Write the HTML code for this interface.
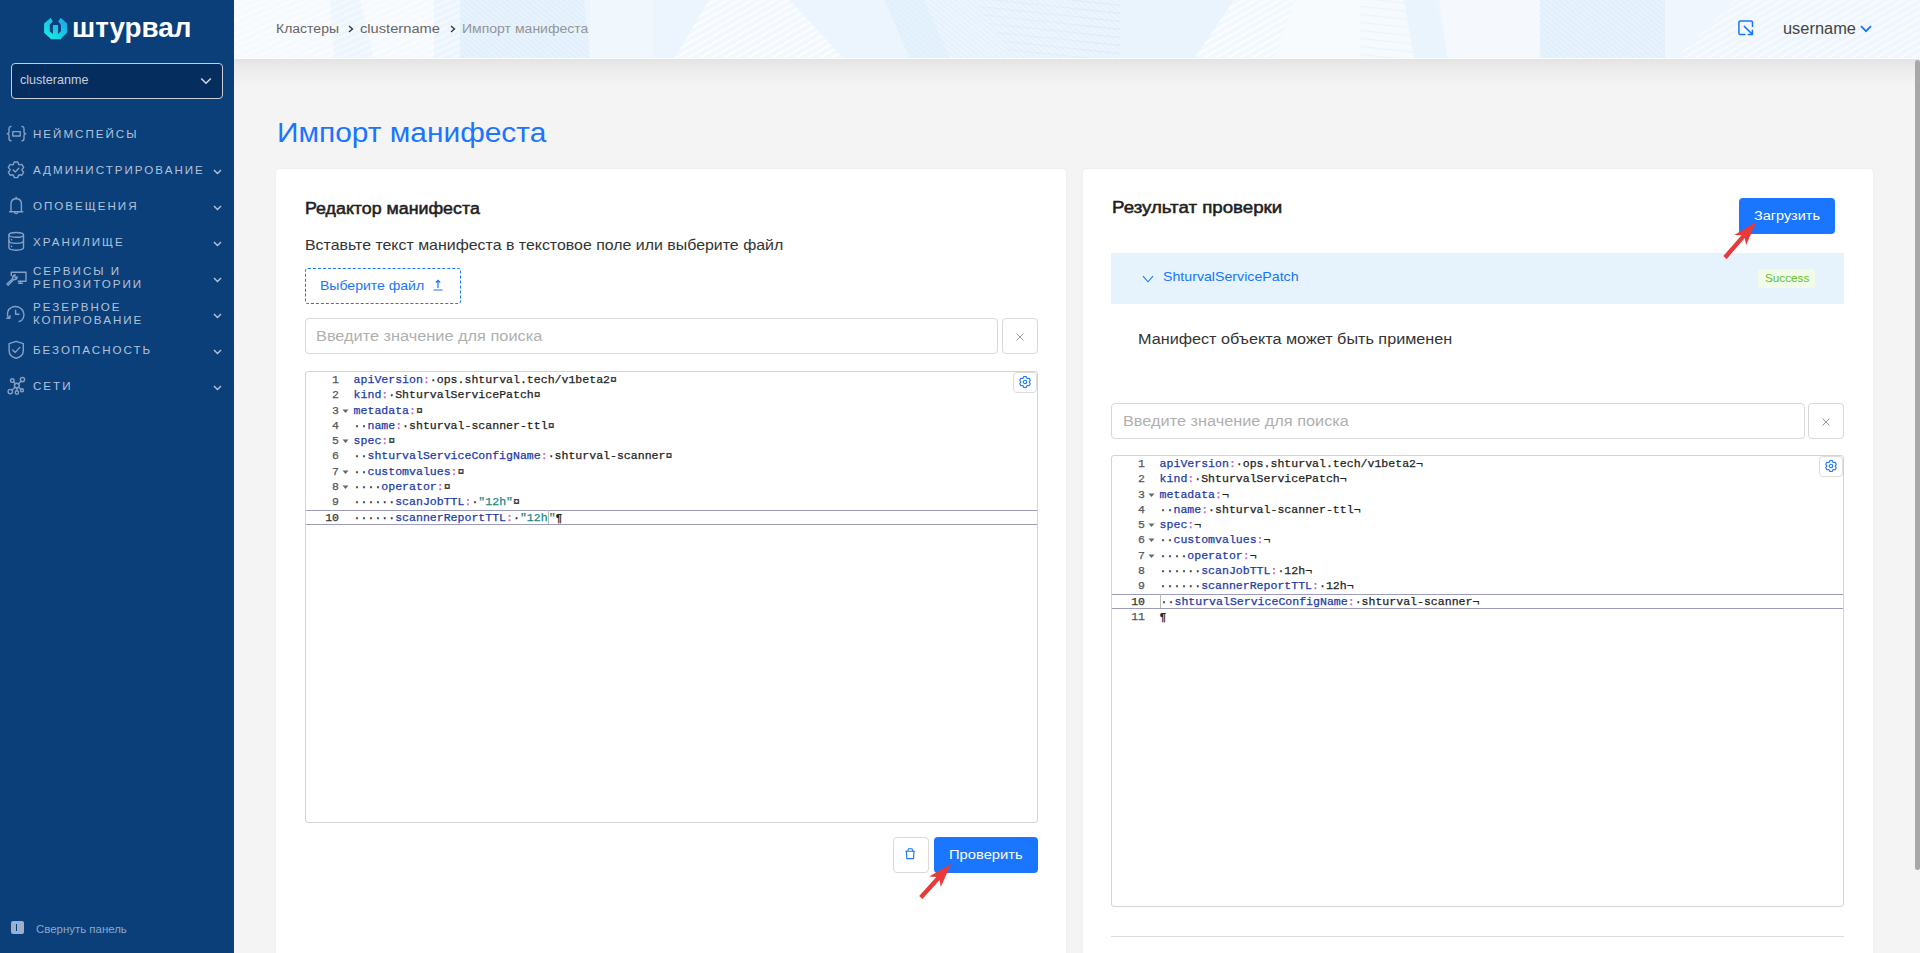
<!DOCTYPE html>
<html><head><meta charset="utf-8"><style>
*{box-sizing:border-box;margin:0;padding:0}
html,body{width:1920px;height:953px;overflow:hidden;background:#f4f4f4;font-family:"Liberation Sans",sans-serif;color:#1f1f1f}
.abs{position:absolute}
#sb{position:absolute;left:0;top:0;width:234px;height:953px;background:#0a3f7a}
#hdr{position:absolute;left:234px;top:0;width:1686px;height:59px;background:#f1f7fd;overflow:hidden}
#shadow{position:absolute;left:234px;top:59px;width:1686px;height:28px;background:linear-gradient(#e3e3e3,#ebebeb 30%,#f4f4f4)}
.card{position:absolute;top:169px;height:800px;background:#fff;border-radius:4px;box-shadow:0 0 3px rgba(0,0,0,.05)}
.txt{position:absolute;white-space:nowrap;line-height:1}
.nav{position:absolute;left:33px;color:#b3c3d9;font-size:11.6px;letter-spacing:2.0px;white-space:nowrap;line-height:13px}
.btn{position:absolute;background:#1a75ff;border-radius:4px}
.input{position:absolute;border:1px solid #d9d9d9;border-radius:4px;background:#fff}
.editor{position:absolute;border:1px solid #d4d4d4;border-radius:3px;background:#fff}
.code{position:absolute;font-family:"Liberation Mono",monospace;font-size:11.55px;line-height:15.3px;white-space:pre;color:#333}
.code{-webkit-text-stroke:0.25px currentColor}.code .k{color:#1d3aa8}.code .p{color:#c85ac8}.code .v{color:#222}.code .s{color:#178883}.code .i{color:#222}
.code .cur{display:inline-block;width:0;height:14px;border-left:1px solid #bbb;vertical-align:top;margin-top:0px}
.gut{text-align:right}
</style></head><body>

<div id="sb">
<svg class="abs" style="left:40px;top:14px" width="32" height="30" viewBox="0 0 32 30">
<defs><linearGradient id="lg" x1="0" y1="1" x2="1" y2="0"><stop offset="0" stop-color="#1ef2df"/><stop offset="1" stop-color="#1a9fe9"/></linearGradient></defs>
<path fill="url(#lg)" d="M10.7,3.8 L12.8,7.6 L9.8,10.8 L9.8,17.2 L12.9,19.9 L12.9,11 L18.1,11 L18.1,19.9 L20.9,17.2 L20.9,10.8 L18.2,7.6 L20.6,3.8 L27.1,9.6 L27.1,18.8 L20.5,25.2 L11.2,25.2 L4.1,18.8 L4.1,9.6 Z"/>
</svg>
<div class="txt" style="left:71.97px;top:14.0px;font-size:27.45px;font-weight:700;color:#fff;transform:scaleX(1.0132);transform-origin:0 0;">штурвал</div>
<div class="abs" style="left:11px;top:63px;width:212px;height:36px;border:1.3px solid #c9cdd6;border-radius:4px;background:#052e5f"></div>
<div class="txt" style="left:19.82px;top:74.0px;font-size:12.87px;font-weight:400;color:#c6cedb;transform:scaleX(0.9768);transform-origin:0 0;">clusteranme</div>
<svg class="abs" style="left:200px;top:77px" width="12" height="8" viewBox="0 0 12 8"><path d="M1.2 1.5 L6 6.2 L10.8 1.5" fill="none" stroke="#d0d5de" stroke-width="1.6"/></svg>
<div class="nav" style="top:126.7px">НЕЙМСПЕЙСЫ</div>
<div class="nav" style="top:162.7px">АДМИНИСТРИРОВАНИЕ</div>
<svg class="abs" style="left:213px;top:169.1px" width="9" height="6" viewBox="0 0 9 6"><path d="M1 1 L4.5 4.5 L8 1" fill="none" stroke="#b6c4d8" stroke-width="1.4"/></svg>
<div class="nav" style="top:198.7px">ОПОВЕЩЕНИЯ</div>
<svg class="abs" style="left:213px;top:205.1px" width="9" height="6" viewBox="0 0 9 6"><path d="M1 1 L4.5 4.5 L8 1" fill="none" stroke="#b6c4d8" stroke-width="1.4"/></svg>
<div class="nav" style="top:234.7px">ХРАНИЛИЩЕ</div>
<svg class="abs" style="left:213px;top:241.1px" width="9" height="6" viewBox="0 0 9 6"><path d="M1 1 L4.5 4.5 L8 1" fill="none" stroke="#b6c4d8" stroke-width="1.4"/></svg>
<div class="nav" style="top:264.0px">СЕРВИСЫ И</div>
<div class="nav" style="top:277.0px">РЕПОЗИТОРИИ</div>
<svg class="abs" style="left:213px;top:277.1px" width="9" height="6" viewBox="0 0 9 6"><path d="M1 1 L4.5 4.5 L8 1" fill="none" stroke="#b6c4d8" stroke-width="1.4"/></svg>
<div class="nav" style="top:300.0px">РЕЗЕРВНОЕ</div>
<div class="nav" style="top:313.0px">КОПИРОВАНИЕ</div>
<svg class="abs" style="left:213px;top:313.1px" width="9" height="6" viewBox="0 0 9 6"><path d="M1 1 L4.5 4.5 L8 1" fill="none" stroke="#b6c4d8" stroke-width="1.4"/></svg>
<div class="nav" style="top:342.7px">БЕЗОПАСНОСТЬ</div>
<svg class="abs" style="left:213px;top:349.1px" width="9" height="6" viewBox="0 0 9 6"><path d="M1 1 L4.5 4.5 L8 1" fill="none" stroke="#b6c4d8" stroke-width="1.4"/></svg>
<div class="nav" style="top:378.7px">СЕТИ</div>
<svg class="abs" style="left:213px;top:385.1px" width="9" height="6" viewBox="0 0 9 6"><path d="M1 1 L4.5 4.5 L8 1" fill="none" stroke="#b6c4d8" stroke-width="1.4"/></svg>

<svg class="abs" style="left:0;top:110px" width="34" height="300" viewBox="0 110 34 300" fill="none" stroke="#86a0c4" stroke-width="1.4" stroke-linecap="round" stroke-linejoin="round">
 <!-- braces -->
 <path d="M11 126.5 C9 126.5 9 127.5 9 129.5 L9 132 C9 133.2 8 133.8 7.3 133.8 C8 133.8 9 134.4 9 135.6 L9 138.5 C9 140.3 9.5 140.8 11 140.8"/>
 <path d="M22 126.5 C24 126.5 24 127.5 24 129.5 L24 132 C24 133.2 25 133.8 25.7 133.8 C25 133.8 24 134.4 24 135.6 L24 138.5 C24 140.3 23.5 140.8 22 140.8"/>
 <rect x="12.8" y="131.6" width="7.4" height="4.4"/>
 <!-- gear check -->
 <path d="M13.37 164.41 L14.20 162.01 L17.80 162.01 L18.63 164.41 L19.36 164.83 L21.85 164.34 L23.65 167.46 L21.99 169.38 L21.99 170.22 L23.65 172.14 L21.85 175.26 L19.36 174.77 L18.63 175.19 L17.80 177.59 L14.20 177.59 L13.37 175.19 L12.64 174.77 L10.15 175.26 L8.35 172.14 L10.01 170.22 L10.01 169.38 L8.35 167.46 L10.15 164.34 L12.64 164.83 Z"/>
 <path d="M13.2 170 L15.2 172 L18.8 168.3"/>
 <!-- bell -->
 <path d="M11 211.5 L11 204 C11 200.5 13.3 198.8 16.2 198.8 C19.1 198.8 21.4 200.5 21.4 204 L21.4 211.5"/>
 <path d="M9.6 211.8 L22.8 211.8"/><path d="M16.2 197.3 L16.2 198.6"/><path d="M14.6 212.5 C14.8 214 17.6 214 17.8 212.5"/>
 <!-- database -->
 <ellipse cx="16.2" cy="234.9" rx="7.3" ry="2.4"/>
 <path d="M8.9 234.9 L8.9 247.6 C8.9 249 12 250.2 16.2 250.2 C20.4 250.2 23.5 249 23.5 247.6 L23.5 234.9"/>
 <path d="M8.9 240.8 C8.9 242.2 12 243.4 16.2 243.4 C20.4 243.4 23.5 242.2 23.5 240.8"/>
 <path d="M11.5 239.8 L11.6 239.8 M11.5 246.4 L11.6 246.4" stroke-width="1.6"/>
 <!-- monitor wrench -->
 <path d="M11.3 275.5 L11.3 272.2 L26 272.2 L26 281.2 L18.2 281.2"/>
 <path d="M18.6 283.2 L22.3 283.2 M20.4 281.4 L20.4 283"/>
 <path d="M7 284 L12.8 278.4 C12.1 276.6 13.4 274.8 15.3 275 L14.3 276.6 L15.6 277.9 L17.2 276.9 C17.3 278.9 15.5 280.1 13.8 279.5 L8.1 285.2 Z"/>
 <!-- clock -->
 <path d="M8.5 318.2 C6.3 314.2 7.6 309 12 307.2 C16.5 305.3 21.6 307.5 23.4 312 C25 316.2 23 320.6 19.2 321.5"/>
 <path d="M6.8 318.2 L9.8 318.2 L10 315.8"/>
 <path d="M15.6 310.2 L15.6 314.2 L19 314.2"/>
 <!-- shield -->
 <path d="M16.2 341.3 L23.3 343.6 L23.3 350.5 C23.3 354.8 20 357.4 16.2 358.3 C12.4 357.4 9.1 354.8 9.1 350.5 L9.1 343.6 Z"/>
 <path d="M12.7 350 L15.3 352.4 L19.8 347.4"/>
 <!-- network -->
 <circle cx="16.8" cy="385.6" r="2.4"/>
 <circle cx="12.3" cy="380.6" r="1.8"/><circle cx="22.5" cy="379.6" r="2.1"/>
 <circle cx="10.3" cy="391.6" r="2.2"/><circle cx="16.9" cy="392.5" r="1.7"/><circle cx="22" cy="390.3" r="1.5"/>
 <path d="M13.4 381.8 L15.3 383.8 M18.4 384 L21 381.2 M15 387.3 L12 390.2 M16.9 388 L16.9 390.8 M18.6 387.2 L20.8 389.3"/>
</svg>

<div class="abs" style="left:11px;top:921px;width:13px;height:13px;border-radius:2px;background:#9eb0c9"></div>
<div class="abs" style="left:15.5px;top:924px;width:1.4px;height:7px;background:#0a3f7a"></div>
<div class="txt" style="left:36.39px;top:924.8px;font-size:10.32px;font-weight:400;color:#8ea8c9;transform:scaleX(1.1088);transform-origin:0 0;">Свернуть панель</div>
</div>


<div id="hdr">
<svg class="abs" style="left:0;top:0" width="1686" height="59">
 <defs>
  <pattern id="pw" width="6" height="6" patternUnits="userSpaceOnUse" patternTransform="rotate(-30)"><rect width="6" height="2" fill="#ffffff" opacity=".75"/></pattern>
  <pattern id="pb" width="4" height="4" patternUnits="userSpaceOnUse" patternTransform="rotate(40)"><rect width="4" height="1" fill="#d6e9fb" opacity=".6"/></pattern>
  <pattern id="pw2" width="6" height="6" patternUnits="userSpaceOnUse" patternTransform="rotate(-25)"><rect width="6" height="1.8" fill="#ffffff" opacity=".8"/></pattern>
  <pattern id="ph" width="8" height="8" patternUnits="userSpaceOnUse" patternTransform="rotate(6)"><rect width="8" height="1.2" fill="#dcecfa" opacity=".8"/></pattern>
 </defs>
 <rect width="1686" height="59" fill="#ecf5fd"/>
 <rect x="0" width="200" height="59" fill="#f6fafe"/>
 <polygon points="96,0 126,0 140,59 100,59" fill="#edf5fd"/>
 <rect x="0" width="240" height="59" fill="url(#pw2)" opacity=".6"/>
 <polygon points="226,0 350,0 356,59 226,59" fill="#e7f2fd"/>
 <polygon points="226,0 350,0 356,59 226,59" fill="url(#pb)"/>
 <polygon points="356,0 420,0 420,59 356,59" fill="#f0f7fd"/>
 <polygon points="475,0 556,0 610,59 440,59" fill="#f2f8fe"/>
 <polygon points="475,0 556,0 610,59 440,59" fill="url(#pw)"/>
 <polygon points="650,0 690,0 716,59 676,59" fill="#e5f2fc"/>
 <polygon points="650,0 900,0 900,59 676,59" fill="url(#pb)" opacity=".8"/>
 <polygon points="740,0 900,0 900,59 780,59" fill="url(#ph)"/>
 <polygon points="846,0 900,0 886,59 846,59" fill="url(#ph)"/>
 <polygon points="886,0 1000,0 980,59 886,59" fill="#e9f4fd"/>
 <polygon points="1000,0 1060,0 1040,59 960,59" fill="#f1f8fe"/>
 <polygon points="1000,0 1060,0 1040,59 960,59" fill="url(#pw)"/>
 <polygon points="1060,0 1130,0 1126,59 1040,59" fill="#f8fbfe"/>
 <polygon points="1126,0 1180,0 1180,59 1126,59" fill="#f6fafe"/>
 <polygon points="1126,0 1180,0 1180,59 1126,59" fill="url(#ph)" opacity=".6"/>
 <polygon points="1170,0 1200,0 1214,59 1180,59" fill="#eaf4fd"/>
 <polygon points="1205,0 1306,0 1306,59 1214,59" fill="#f5f9fe"/>
 <polygon points="1306,0 1431,0 1431,59 1306,59" fill="#e7f2fd"/>
 <polygon points="1306,0 1431,0 1431,59 1306,59" fill="url(#pb)"/>
 <polygon points="1431,0 1686,0 1686,59 1431,59" fill="#eff6fd"/>
 <polygon points="1500,0 1686,0 1686,59 1440,59" fill="url(#pw)" opacity=".7"/>
 <rect y="58" width="1686" height="1" fill="#fafcfe"/>
</svg>
<div class="txt" style="left:276.23px;top:21.8px;font-size:13.08px;font-weight:400;color:#666;transform:scaleX(1.0702);transform-origin:0 0;margin-left:-234px">Кластеры</div>
<svg class="abs" style="left:114px;top:25px" width="6" height="8" viewBox="0 0 6 8"><path d="M1 1 L4.5 4 L1 7" fill="none" stroke="#333" stroke-width="1.3"/></svg>
<div class="txt" style="left:359.79px;top:22.0px;font-size:13.25px;font-weight:400;color:#666;transform:scaleX(1.1085);transform-origin:0 0;margin-left:-234px">clustername</div>
<svg class="abs" style="left:215.5px;top:25px" width="6" height="8" viewBox="0 0 6 8"><path d="M1 1 L4.5 4 L1 7" fill="none" stroke="#333" stroke-width="1.3"/></svg>
<div class="txt" style="left:461.8px;top:23.0px;font-size:12.79px;font-weight:400;color:#959595;transform:scaleX(1.0974);transform-origin:0 0;margin-left:-234px">Импорт манифеста</div>
<svg class="abs" style="left:1503.5px;top:20px" width="16" height="16" viewBox="0 0 16 16" fill="none" stroke="#1a75ff" stroke-width="1.5" stroke-linecap="round" stroke-linejoin="round"><path d="M6.9 14.5 L2.2 14.5 Q0.9 14.5 0.9 13.2 L0.9 2.2 Q0.9 0.9 2.2 0.9 L13.2 0.9 Q14.5 0.9 14.5 2.2 L14.5 6.6"/><path d="M6.3 6.4 L14.3 14.2 M14.4 10.2 L14.4 14.4 L10.2 14.4"/></svg>
<div class="txt" style="left:1782.71px;top:21.4px;font-size:15.8px;font-weight:400;color:#444;transform:scaleX(1.0384);transform-origin:0 0;margin-left:-234px">username</div>
<svg class="abs" style="left:1626px;top:25px" width="12" height="8" viewBox="0 0 12 8"><path d="M1 1.2 L6 6.2 L11 1.2" fill="none" stroke="#1a75ff" stroke-width="1.8"/></svg>
</div>

<div id="shadow"></div>
<div class="txt" style="left:276.85px;top:118.9px;font-size:27.76px;font-weight:400;color:#1a75ff;transform:scaleX(1.077);transform-origin:0 0;">Импорт манифеста</div>

<div class="card" style="left:276px;width:790px"></div>
<div class="txt" style="left:304.94px;top:200.6px;font-size:16.86px;font-weight:400;color:#1f1f1f;transform:scaleX(1.0558);transform-origin:0 0;-webkit-text-stroke:0.55px #1f1f1f">Редактор манифеста</div>
<div class="txt" style="left:304.9px;top:237.9px;font-size:14.54px;font-weight:400;color:#333;transform:scaleX(1.095);transform-origin:0 0;">Вставьте текст манифеста в текстовое поле или выберите файл</div>
<div class="abs" style="left:305px;top:268px;width:156px;height:36px;border:1px dashed #1a75ff;border-radius:3px"></div>
<div class="txt" style="left:320.25px;top:279.0px;font-size:13.37px;font-weight:400;color:#1a75ff;transform:scaleX(1.0505);transform-origin:0 0;">Выберите файл</div>
<svg class="abs" style="left:432px;top:279px" width="12" height="12" viewBox="0 0 12 12" fill="none" stroke="#1a75ff" stroke-width="1.2"><path d="M1.5 11 L10.5 11 M6 9 L6 1.5 M3.8 3.5 L6 1.3 L8.2 3.5"/></svg>
<div class="input" style="left:305px;top:318px;width:693px;height:36px"></div>
<div class="txt" style="left:316.35px;top:329.4px;font-size:14.24px;font-weight:400;color:#b0b0b0;transform:scaleX(1.1459);transform-origin:0 0;">Введите значение для поиска</div>
<div class="input" style="left:1002px;top:318px;width:36px;height:36px"></div>
<svg class="abs" style="left:1015px;top:332px" width="10" height="10" viewBox="0 0 10 10" stroke="#9a9a9a" stroke-width="1"><path d="M1.5 1.5 L8.5 8.5 M8.5 1.5 L1.5 8.5"/></svg>

<div class="editor" style="left:305px;top:371px;width:733px;height:452px"></div>
<div class="abs" style="left:306px;top:510.10px;width:731px;height:15.3px;border-top:1px solid #9c9cbd;border-bottom:1px solid #9c9cbd"></div>
<div class="code gut" style="right:1581px;top:371.90px;color:#555">1</div>
<div class="code" style="left:353.6px;top:371.90px"><span class="k">apiVersion</span><span class="p">:</span><span class="i">·</span><span class="v">ops.shturval.tech/v1beta2</span><span class="i">¤</span></div>
<div class="code gut" style="right:1581px;top:387.20px;color:#555">2</div>
<div class="code" style="left:353.6px;top:387.20px"><span class="k">kind</span><span class="p">:</span><span class="i">·</span><span class="v">ShturvalServicePatch</span><span class="i">¤</span></div>
<div class="code gut" style="right:1581px;top:402.50px;color:#555">3</div>
<svg class="abs" style="left:342px;top:408.50px" width="7" height="5" viewBox="0 0 7 5"><path d="M0.5 0.5 L6.5 0.5 L3.5 4 Z" fill="#666"/></svg>
<div class="code" style="left:353.6px;top:402.50px"><span class="k">metadata</span><span class="p">:</span><span class="i">¤</span></div>
<div class="code gut" style="right:1581px;top:417.80px;color:#555">4</div>
<div class="code" style="left:353.6px;top:417.80px"><span class="i">··</span><span class="k">name</span><span class="p">:</span><span class="i">·</span><span class="v">shturval-scanner-ttl</span><span class="i">¤</span></div>
<div class="code gut" style="right:1581px;top:433.10px;color:#555">5</div>
<svg class="abs" style="left:342px;top:439.10px" width="7" height="5" viewBox="0 0 7 5"><path d="M0.5 0.5 L6.5 0.5 L3.5 4 Z" fill="#666"/></svg>
<div class="code" style="left:353.6px;top:433.10px"><span class="k">spec</span><span class="p">:</span><span class="i">¤</span></div>
<div class="code gut" style="right:1581px;top:448.40px;color:#555">6</div>
<div class="code" style="left:353.6px;top:448.40px"><span class="i">··</span><span class="k">shturvalServiceConfigName</span><span class="p">:</span><span class="i">·</span><span class="v">shturval-scanner</span><span class="i">¤</span></div>
<div class="code gut" style="right:1581px;top:463.70px;color:#555">7</div>
<svg class="abs" style="left:342px;top:469.70px" width="7" height="5" viewBox="0 0 7 5"><path d="M0.5 0.5 L6.5 0.5 L3.5 4 Z" fill="#666"/></svg>
<div class="code" style="left:353.6px;top:463.70px"><span class="i">··</span><span class="k">customvalues</span><span class="p">:</span><span class="i">¤</span></div>
<div class="code gut" style="right:1581px;top:479.00px;color:#555">8</div>
<svg class="abs" style="left:342px;top:485.00px" width="7" height="5" viewBox="0 0 7 5"><path d="M0.5 0.5 L6.5 0.5 L3.5 4 Z" fill="#666"/></svg>
<div class="code" style="left:353.6px;top:479.00px"><span class="i">····</span><span class="k">operator</span><span class="p">:</span><span class="i">¤</span></div>
<div class="code gut" style="right:1581px;top:494.30px;color:#555">9</div>
<div class="code" style="left:353.6px;top:494.30px"><span class="i">······</span><span class="k">scanJobTTL</span><span class="p">:</span><span class="i">·</span><span class="s">&quot;12h&quot;</span><span class="i">¤</span></div>
<div class="code gut" style="right:1581px;top:509.60px;color:#333">10</div>
<div class="code" style="left:353.6px;top:509.60px"><span class="i">······</span><span class="k">scannerReportTTL</span><span class="p">:</span><span class="i">·</span><span class="s">&quot;12h</span><span class="cur"></span><span class="s">&quot;</span><span class="i">¶</span></div>
<div class="abs" style="left:1013px;top:372px;width:24px;height:21px;border:1px solid #ddd;border-radius:4px;background:#fff"></div>
<svg class="abs" style="left:1019px;top:376px" width="12" height="12" viewBox="0 0 12 12"><path d="M4.25 2.07 L4.84 0.52 L7.16 0.52 L7.75 2.07 L8.53 2.52 L10.16 2.25 L11.33 4.27 L10.28 5.55 L10.28 6.45 L11.33 7.73 L10.16 9.75 L8.53 9.48 L7.75 9.93 L7.16 11.48 L4.84 11.48 L4.25 9.93 L3.47 9.48 L1.84 9.75 L0.67 7.73 L1.72 6.45 L1.72 5.55 L0.67 4.27 L1.84 2.25 L3.47 2.52 Z" fill="none" stroke="#1a75ff" stroke-width="1.1" stroke-linejoin="round"/><circle cx="6" cy="6" r="1.7" fill="none" stroke="#1a75ff" stroke-width="1.1"/></svg>

<div class="input" style="left:893px;top:837px;width:36px;height:36px"></div>
<svg class="abs" style="left:898px;top:842px" width="24" height="24" viewBox="0 0 24 24" fill="none" stroke="#1a75ff" stroke-width="1.1" stroke-linejoin="round"><path d="M7.3 9.2 L16.9 9.2 M9.6 9.2 L10.4 6.8 L14.1 6.8 L14.8 9.2 M8.4 9.2 L8.8 16.6 L15.5 16.6 L16 9.2"/></svg>
<div class="btn" style="left:934px;top:837px;width:104px;height:36px"></div>
<div class="txt" style="left:948.87px;top:848.1px;font-size:13.08px;font-weight:400;color:#fff;transform:scaleX(1.1266);transform-origin:0 0;">Проверить</div>


<div class="card" style="left:1083px;width:790px"></div>
<div class="txt" style="left:1111.81px;top:199.1px;font-size:17.15px;font-weight:400;color:#1f1f1f;transform:scaleX(1.0903);transform-origin:0 0;-webkit-text-stroke:0.55px #1f1f1f">Результат проверки</div>
<div class="btn" style="left:1739px;top:198px;width:96px;height:36px"></div>
<div class="txt" style="left:1754.14px;top:210.2px;font-size:12.5px;font-weight:400;color:#fff;transform:scaleX(1.1554);transform-origin:0 0;">Загрузить</div>
<div class="abs" style="left:1111px;top:253px;width:733px;height:51px;background:#e6f3fd"></div>
<svg class="abs" style="left:1141.5px;top:275px" width="12" height="9" viewBox="0 0 12 9"><path d="M1 1.2 L6 6.8 L11 1.2" fill="none" stroke="#1a75ff" stroke-width="1.05"/></svg>
<div class="txt" style="left:1162.9px;top:270.9px;font-size:12.94px;font-weight:400;color:#1a75ff;transform:scaleX(1.0959);transform-origin:0 0;">ShturvalServicePatch</div>
<div class="abs" style="left:1758px;top:269px;width:57px;height:19px;background:#f1fbe8;border-radius:3px"></div>
<div class="txt" style="left:1764.69px;top:272.0px;font-size:11.63px;font-weight:400;color:#60c22a;transform:scaleX(1.0095);transform-origin:0 0;">Success</div>
<div class="txt" style="left:1138.11px;top:331.9px;font-size:14.83px;font-weight:400;color:#333;transform:scaleX(1.0923);transform-origin:0 0;">Манифест объекта может быть применен</div>
<div class="input" style="left:1111px;top:403px;width:694px;height:36px"></div>
<div class="txt" style="left:1123.23px;top:415.0px;font-size:13.95px;font-weight:400;color:#b0b0b0;transform:scaleX(1.1685);transform-origin:0 0;">Введите значение для поиска</div>
<div class="input" style="left:1808px;top:403px;width:36px;height:36px"></div>
<svg class="abs" style="left:1821px;top:417px" width="10" height="10" viewBox="0 0 10 10" stroke="#9a9a9a" stroke-width="1"><path d="M1.5 1.5 L8.5 8.5 M8.5 1.5 L1.5 8.5"/></svg>
<div class="abs" style="left:1111px;top:936px;width:733px;height:1px;background:#ddd"></div>

<div class="editor" style="left:1111px;top:455px;width:733px;height:452px"></div>
<div class="abs" style="left:1112px;top:594.10px;width:731px;height:15.3px;border-top:1px solid #9c9cbd;border-bottom:1px solid #9c9cbd"></div>
<div class="code gut" style="right:775px;top:455.90px;color:#555">1</div>
<div class="code" style="left:1159.6px;top:455.90px"><span class="k">apiVersion</span><span class="p">:</span><span class="i">·</span><span class="v">ops.shturval.tech/v1beta2</span><span class="i">¬</span></div>
<div class="code gut" style="right:775px;top:471.20px;color:#555">2</div>
<div class="code" style="left:1159.6px;top:471.20px"><span class="k">kind</span><span class="p">:</span><span class="i">·</span><span class="v">ShturvalServicePatch</span><span class="i">¬</span></div>
<div class="code gut" style="right:775px;top:486.50px;color:#555">3</div>
<svg class="abs" style="left:1148px;top:492.50px" width="7" height="5" viewBox="0 0 7 5"><path d="M0.5 0.5 L6.5 0.5 L3.5 4 Z" fill="#666"/></svg>
<div class="code" style="left:1159.6px;top:486.50px"><span class="k">metadata</span><span class="p">:</span><span class="i">¬</span></div>
<div class="code gut" style="right:775px;top:501.80px;color:#555">4</div>
<div class="code" style="left:1159.6px;top:501.80px"><span class="i">··</span><span class="k">name</span><span class="p">:</span><span class="i">·</span><span class="v">shturval-scanner-ttl</span><span class="i">¬</span></div>
<div class="code gut" style="right:775px;top:517.10px;color:#555">5</div>
<svg class="abs" style="left:1148px;top:523.10px" width="7" height="5" viewBox="0 0 7 5"><path d="M0.5 0.5 L6.5 0.5 L3.5 4 Z" fill="#666"/></svg>
<div class="code" style="left:1159.6px;top:517.10px"><span class="k">spec</span><span class="p">:</span><span class="i">¬</span></div>
<div class="code gut" style="right:775px;top:532.40px;color:#555">6</div>
<svg class="abs" style="left:1148px;top:538.40px" width="7" height="5" viewBox="0 0 7 5"><path d="M0.5 0.5 L6.5 0.5 L3.5 4 Z" fill="#666"/></svg>
<div class="code" style="left:1159.6px;top:532.40px"><span class="i">··</span><span class="k">customvalues</span><span class="p">:</span><span class="i">¬</span></div>
<div class="code gut" style="right:775px;top:547.70px;color:#555">7</div>
<svg class="abs" style="left:1148px;top:553.70px" width="7" height="5" viewBox="0 0 7 5"><path d="M0.5 0.5 L6.5 0.5 L3.5 4 Z" fill="#666"/></svg>
<div class="code" style="left:1159.6px;top:547.70px"><span class="i">····</span><span class="k">operator</span><span class="p">:</span><span class="i">¬</span></div>
<div class="code gut" style="right:775px;top:563.00px;color:#555">8</div>
<div class="code" style="left:1159.6px;top:563.00px"><span class="i">······</span><span class="k">scanJobTTL</span><span class="p">:</span><span class="i">·</span><span class="v">12h</span><span class="i">¬</span></div>
<div class="code gut" style="right:775px;top:578.30px;color:#555">9</div>
<div class="code" style="left:1159.6px;top:578.30px"><span class="i">······</span><span class="k">scannerReportTTL</span><span class="p">:</span><span class="i">·</span><span class="v">12h</span><span class="i">¬</span></div>
<div class="code gut" style="right:775px;top:593.60px;color:#333">10</div>
<div class="code" style="left:1159.6px;top:593.60px"><span class="cur"></span><span class="i">··</span><span class="k">shturvalServiceConfigName</span><span class="p">:</span><span class="i">·</span><span class="v">shturval-scanner</span><span class="i">¬</span></div>
<div class="code gut" style="right:775px;top:608.90px;color:#555">11</div>
<div class="code" style="left:1159.6px;top:608.90px"><span class="i">¶</span></div>
<div class="abs" style="left:1819px;top:456px;width:24px;height:21px;border:1px solid #ddd;border-radius:4px;background:#fff"></div>
<svg class="abs" style="left:1825px;top:460px" width="12" height="12" viewBox="0 0 12 12"><path d="M4.25 2.07 L4.84 0.52 L7.16 0.52 L7.75 2.07 L8.53 2.52 L10.16 2.25 L11.33 4.27 L10.28 5.55 L10.28 6.45 L11.33 7.73 L10.16 9.75 L8.53 9.48 L7.75 9.93 L7.16 11.48 L4.84 11.48 L4.25 9.93 L3.47 9.48 L1.84 9.75 L0.67 7.73 L1.72 6.45 L1.72 5.55 L0.67 4.27 L1.84 2.25 L3.47 2.52 Z" fill="none" stroke="#1a75ff" stroke-width="1.1" stroke-linejoin="round"/><circle cx="6" cy="6" r="1.7" fill="none" stroke="#1a75ff" stroke-width="1.1"/></svg>
<svg class="abs" style="left:0;top:0" width="1920" height="953">
<polygon points="951.0,864.0 940.8,887.1 939.6,880.0 922.4,899.1 919.2,896.1 936.3,877.0 929.2,876.6" fill="#e8393b"/>
<polygon points="1756.0,222.0 1746.1,245.2 1744.8,238.1 1726.7,258.9 1723.3,256.1 1741.5,235.2 1734.3,234.9" fill="#e8393b"/>
</svg>
<div class="abs" style="left:1915px;top:60px;width:5px;height:810px;background:#a8a8a8;border-radius:3px"></div>
</body></html>
